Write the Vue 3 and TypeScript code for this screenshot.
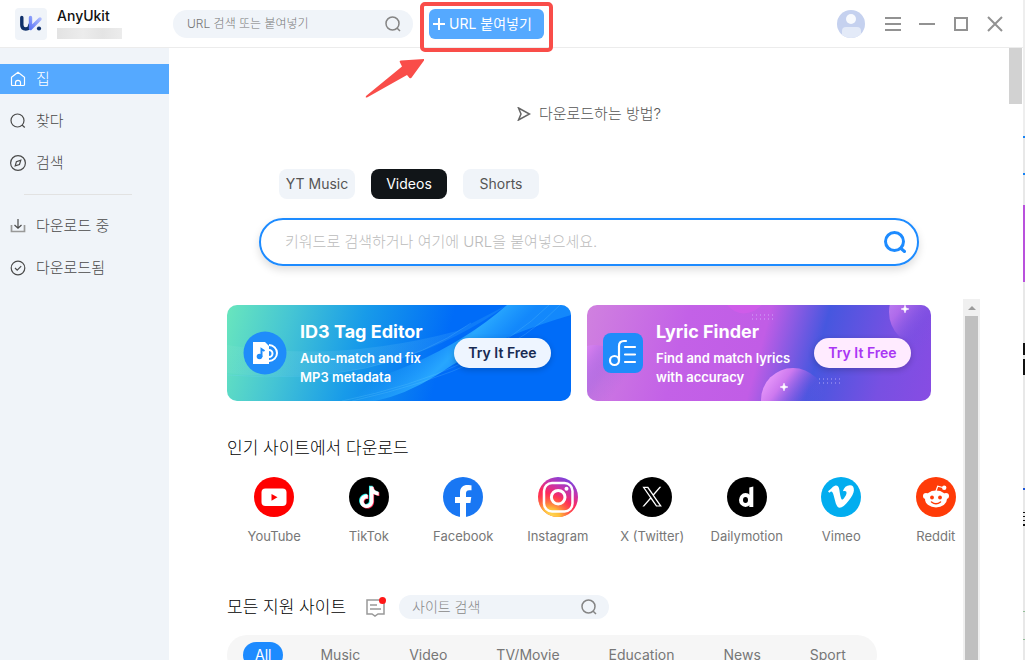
<script setup lang="ts">
import { ref } from 'vue'

interface NavItem { id: string; label: string }
interface Banner { id: string; title: string; lines: string[] }

const primaryNav: NavItem[] = [
  { id: 'home', label: '집' },
  { id: 'find', label: '찾다' },
  { id: 'explore', label: '검색' },
]
const downloadNav: NavItem[] = [
  { id: 'downloading', label: '다운로드 중' },
  { id: 'downloaded', label: '다운로드됨' },
]
const tabs: string[] = ['YT Music', 'Videos', 'Shorts']
const banners: Banner[] = [
  { id: 'tag', title: 'ID3 Tag Editor', lines: ['Auto-match and fix', 'MP3 metadata'] },
  { id: 'lyric', title: 'Lyric Finder', lines: ['Find and match lyrics', 'with accuracy'] },
]
const sites: string[] = ['YouTube', 'TikTok', 'Facebook', 'Instagram', 'X (Twitter)', 'Dailymotion', 'Vimeo', 'Reddit']
const categories: string[] = ['All', 'Music', 'Video', 'TV/Movie', 'Education', 'News', 'Sport']

const activeNav = ref<string>('home')
const activeTab = ref<string>('Videos')
const activeCategory = ref<string>('All')
const headerQuery = ref<string>('')
const mainQuery = ref<string>('')
const siteQuery = ref<string>('')

const notePath =
  'M12.525.02c1.31-.02 2.61-.01 3.91-.02.08 1.53.63 3.09 1.75 4.17 1.12 1.11 2.7 1.62 4.24 1.79v4.03c-1.44-.05-2.89-.35-4.2-.97-.57-.26-1.1-.59-1.62-.93-.01 2.92.01 5.84-.02 8.75-.08 1.4-.54 2.79-1.35 3.94-1.31 1.92-3.58 3.17-5.91 3.21-1.43.08-2.86-.31-4.08-1.03-2.02-1.19-3.44-3.37-3.65-5.71-.02-.5-.03-1-.01-1.49.18-1.9 1.12-3.72 2.58-4.96 1.66-1.44 3.98-2.13 6.15-1.72.02 1.48-.04 2.96-.04 4.44-.99-.32-2.15-.23-3.02.37-.63.41-1.11 1.04-1.36 1.75-.21.51-.15 1.07-.14 1.61.24 1.64 1.82 3.02 3.5 2.87 1.12-.01 2.19-.66 2.77-1.61.19-.33.4-.67.41-1.06.1-1.79.06-3.57.07-5.36.01-4.03-.01-8.05.02-12.07z'
</script>

<template>
  <div class="desktop">
    <div class="window">
      <header class="header">
        <div class="brand">
          <svg class="logo" viewBox="0 0 32 32" aria-hidden="true">
            <defs>
              <linearGradient id="logoFade" x1="1" y1="0" x2="0" y2="1">
                <stop offset="0" stop-color="#aebcff" /><stop offset="1" stop-color="#5f78f5" />
              </linearGradient>
            </defs>
            <rect width="32" height="32" rx="4" fill="#f0f4f9" />
            <path d="M6.800 9.500v7.500q0 4 4 4 4 0 4-4" fill="none" stroke="#10316b" stroke-width="3.400" stroke-linecap="round" />
            <path d="M15.500 9.500v11L25 11" fill="none" stroke="url(#logoFade)" stroke-width="3.400" stroke-linecap="round" stroke-linejoin="round" />
            <circle cx="24" cy="20.500" r="2.100" fill="#10316b" />
          </svg>
          <div class="brand-text">
            <strong>AnyUkit</strong>
            <span class="version-mask"></span>
          </div>
        </div>
        <label class="search header-search">
          <input v-model="headerQuery" type="text" placeholder="URL 검색 또는 붙여넣기" aria-label="URL 검색 또는 붙여넣기" />
          <svg viewBox="0 0 18 18" width="18" height="18" aria-hidden="true"><circle cx="8.500" cy="8.500" r="6.500" /><path d="m13 13 3 3" /></svg>
        </label>
        <div class="paste">
          <button class="paste-button" type="button">
            <svg viewBox="0 0 12 12" width="12" height="12" aria-hidden="true"><path d="M6 0v12M0 6h12" /></svg>
            <span>URL 붙여넣기</span>
          </button>
          <div class="callout"></div>
          <svg class="arrow" viewBox="0 0 60 42" aria-hidden="true"><path d="M59 2 36 3.500q-2 0-1 2l2 4L1 39q-1 2 1 1.500L42 18l2.500 3q1.500 1 2.500-1L59 3.500z" /></svg>
        </div>
        <div class="window-tools">
          <button class="avatar" type="button" aria-label="Account">
            <svg viewBox="0 0 28 28" aria-hidden="true">
              <defs><clipPath id="face"><circle cx="14" cy="14" r="14" /></clipPath></defs>
              <g clip-path="url(#face)"><rect width="28" height="28" fill="#c5d1ef" /><rect x="5" y="17" width="19" height="14" rx="4" fill="#e3eaf8" /><circle cx="14" cy="9" r="5" fill="#f8fafe" /></g>
            </svg>
          </button>
          <button type="button" aria-label="Menu"><svg viewBox="0 0 16 16"><path d="M0 2h16M0 8h16M0 14h16" /></svg></button>
          <button type="button" aria-label="Minimize"><svg viewBox="0 0 16 16"><path d="M0 8h16" /></svg></button>
          <button type="button" aria-label="Maximize"><svg viewBox="0 0 16 16"><path d="M2 2h12v12H2z" /></svg></button>
          <button type="button" aria-label="Close"><svg viewBox="0 0 16 16"><path d="m1 1 14 14M15 1 1 15" /></svg></button>
        </div>
      </header>

      <div class="body">
        <nav class="sidebar">
          <button v-for="item in primaryNav" :key="item.id" type="button" class="nav-item" :class="{ active: activeNav === item.id }" @click="activeNav = item.id">
            <svg viewBox="0 0 16 16" aria-hidden="true">
              <path v-if="item.id === 'home'" d="M1.500 6.300 8 1.200l6.500 5.100v7.200q0 1-1 1h-11q-1 0-1-1zM5.500 14.500v-2.700a2.500 2.500 0 0 1 5 0v2.700" />
              <g v-else-if="item.id === 'find'"><circle cx="7.500" cy="7.500" r="6.500" /><path d="m12 12 2.800 2.500" /></g>
              <g v-else><circle cx="8" cy="8" r="7.400" /><path d="m5.200 10.800 1.200-4.200 4.400-1.400-1.300 4.300z" /></g>
            </svg>
            <span>{{ item.label }}</span>
          </button>
          <hr />
          <button v-for="item in downloadNav" :key="item.id" type="button" class="nav-item" :class="{ active: activeNav === item.id }" @click="activeNav = item.id">
            <svg viewBox="0 0 16 16" aria-hidden="true">
              <g v-if="item.id === 'downloading'"><path d="M8 1v9M4.500 7 8 10.300 11.500 7" /><path d="M1.500 7v6.500h13V7" stroke="#999" stroke-width="1.700" /></g>
              <g v-else><circle cx="8" cy="8" r="6.800" /><path d="m5 8 2.200 2.200 4-4" /></g>
            </svg>
            <span>{{ item.label }}</span>
          </button>
        </nav>

        <main class="content">
          <a class="how-to" href="#">
            <svg viewBox="0 0 14 14" aria-hidden="true"><path d="m1.500 1 11 6-11 6L4 7z" /></svg>
            <span>다운로드하는 방법?</span>
          </a>
          <section class="finder">
            <div class="tabs" role="tablist">
              <button v-for="tab in tabs" :key="tab" type="button" role="tab" :aria-selected="activeTab === tab" :class="{ active: activeTab === tab }" @click="activeTab = tab">{{ tab }}</button>
            </div>
            <label class="main-search">
              <input v-model="mainQuery" type="text" placeholder="키워드로 검색하거나 여기에 URL을 붙여넣으세요." aria-label="키워드로 검색" />
              <svg viewBox="0 0 22 22" aria-hidden="true"><circle cx="10.500" cy="10.500" r="9" /><path d="m17 17.500 3.500 3" /></svg>
            </label>
          </section>

          <section class="panel">
            <div class="panel-content">
              <div class="banners">
                <article v-for="banner in banners" :key="banner.id" class="banner" :class="banner.id">
                  <svg v-if="banner.id === 'tag'" class="art" viewBox="0 0 344 96" preserveAspectRatio="none" aria-hidden="true">
                    <defs>
                      <linearGradient id="wave" gradientUnits="userSpaceOnUse" x1="190" y1="30" x2="236" y2="76"><stop offset="0" stop-color="#2cadff" stop-opacity="0" /><stop offset=".6" stop-color="#2cadff" stop-opacity=".9" /><stop offset="1" stop-color="#26a4ff" stop-opacity=".5" /></linearGradient>
                      <linearGradient id="mist" x1="0" x2="1"><stop offset="0" stop-color="#fff" stop-opacity=".04" /><stop offset="1" stop-color="#38bdf8" stop-opacity=".2" /></linearGradient>
                    </defs>
                    <path d="M0 68Q160 86 280 0L230 26Q110 58 0 40z" fill="url(#mist)" />
                    <path d="M60 96Q200 70 280 0h64v10Q262 34 210 70 178 90 148 96z" fill="url(#wave)" />
                    <path d="M115 96Q255 67 322 0M125 96Q275 62 333 0M0 70q155 12 244-52" fill="none" stroke="#78d5ff" stroke-opacity=".2" />
                  </svg>
                  <svg v-else class="art" viewBox="0 0 344 96" preserveAspectRatio="none" aria-hidden="true">
                    <defs>
                      <linearGradient id="bubble" x1="0" y1=".1" x2=".8" y2=".7"><stop offset="0" stop-color="#f4a6ff" /><stop offset=".35" stop-color="#cd79ef" /><stop offset=".75" stop-color="#7753e1" stop-opacity=".2" /><stop offset="1" stop-color="#7753e1" stop-opacity="0" /></linearGradient>
                    </defs>
                    <circle cx="8" cy="74" r="34" fill="url(#bubble)" opacity=".75" />
                    <circle cx="206" cy="95" r="32" fill="url(#bubble)" />
                    <circle cx="336" cy="7" r="34" fill="url(#bubble)" opacity=".65" />
                    <path d="M140 0q12 13 27 6l8-6z" fill="#d75ceb" opacity=".6" />
                    <path d="M165 10h23M165 14h23M232 74h23M232 78h23" stroke="#d8c7ff" stroke-opacity=".7" stroke-width="1" stroke-dasharray="1 3" />
                    <path d="m197 78 1 3 3 1-3 1-1 3-1-3-3-1 3-1zM318 0l1 3 3 1-3 1-1 3-1-3-3-1 3-1z" fill="#fff" stroke="#fff" stroke-width=".5" />
                  </svg>
                  <svg v-if="banner.id === 'tag'" class="product" viewBox="0 0 44 44" aria-hidden="true">
                    <circle cx="22" cy="22" r="21.500" fill="#1f8cfa" />
                    <path d="M26 14a8 8 0 0 1 0 16M26 19a3.500 3.500 0 0 1 0 7" fill="none" stroke="#fff" stroke-width="2" />
                    <path d="M10 11h12l4 4v18H10z" fill="#fff" /><path d="M18.500 26v-8l3 2" fill="none" stroke="#1f8cfa" stroke-width="2" /><circle cx="16.500" cy="25.500" r="2.800" fill="#1f8cfa" />
                  </svg>
                  <svg v-else class="product square" viewBox="0 0 40 40" aria-hidden="true">
                    <rect width="40" height="40" rx="8" fill="#1f8cfa" /><path d="M16 27V13q0-5 5-5h2M22 14h10M22 21.500h10M22 29h10" fill="none" stroke="#fff" stroke-width="2.200" stroke-linecap="round" /><circle cx="11.500" cy="27.500" r="4.500" fill="none" stroke="#fff" stroke-width="2.200" />
                  </svg>
                  <div class="banner-copy">
                    <h3>{{ banner.title }}</h3>
                    <p><template v-for="(line, i) in banner.lines" :key="line"><br v-if="i > 0" />{{ line }}</template></p>
                  </div>
                  <button type="button">Try It Free</button>
                </article>
              </div>

              <h2>인기 사이트에서 다운로드</h2>
              <div class="sites">
                <a v-for="site in sites" :key="site" href="#" class="site">
                  <svg viewBox="0 0 40 40" aria-hidden="true">
                    <g v-if="site === 'YouTube'"><circle cx="20" cy="20" r="20" fill="#f00" /><rect x="7.500" y="11.500" width="25" height="17.500" rx="4" fill="#fff" /><path d="m17.500 17 6 3.300-6 3.400z" fill="#f00" /></g>
                    <g v-else-if="site === 'TikTok'"><circle cx="20" cy="20" r="20" /><path :d="notePath" fill="#25f4ee" transform="translate(8.700 8.800) scale(.9)" /><path :d="notePath" fill="#fe2c55" transform="translate(10.200 10) scale(.9)" /><path :d="notePath" fill="#fff" transform="translate(9.500 9.400) scale(.9)" /></g>
                    <g v-else-if="site === 'Facebook'"><circle cx="20" cy="20" r="20" fill="#1977f3" /><path d="M17 40V26h-5v-6h5v-4.500c0-5 3-7.500 7.500-7.500 2 0 4 .4 4 .4v4.900h-2.300c-2.500 0-3.200 1.500-3.200 3.100V20h5.300l-.9 6H23v14z" fill="#fff" /></g>
                    <g v-else-if="site === 'Instagram'">
                      <defs>
                        <linearGradient id="instaBase" x1=".8" y1="0" x2=".3" y2="1"><stop offset="0" stop-color="#6845e8" /><stop offset=".3" stop-color="#c435ae" /><stop offset=".55" stop-color="#ff285b" /><stop offset="1" stop-color="#ff5640" /></linearGradient>
                        <radialGradient id="instaGlow" cx=".3" cy="1.050" r=".65"><stop offset="0" stop-color="#ffe35b" /><stop offset=".4" stop-color="#ffbd39" /><stop offset="1" stop-color="#ff6a35" stop-opacity="0" /></radialGradient>
                      </defs>
                      <circle cx="20" cy="20" r="20" fill="url(#instaBase)" /><circle cx="20" cy="20" r="20" fill="url(#instaGlow)" />
                      <g fill="none" stroke="#fff" stroke-width="2.500"><rect x="6" y="6" width="28.500" height="28.500" rx="8" /><circle cx="20.200" cy="20.200" r="6.800" stroke-width="3" /></g><circle cx="28.500" cy="11.800" r="2" fill="#fff" />
                    </g>
                    <g v-else-if="site === 'X (Twitter)'"><circle cx="20" cy="20" r="20" /><path d="M14.234 10.162 22.977 0h-2.072l-7.591 8.824L7.251 0H.258l9.168 13.343L.258 24H2.330l8.016-9.318L16.749 24h6.993zm-2.837 3.299-.929-1.329L3.076 1.560h3.182l5.965 8.532.929 1.329 7.754 11.090h-3.182z" fill="#fff" transform="translate(10.200 9.700) scale(.83)" /></g>
                    <g v-else-if="site === 'Dailymotion'"><circle cx="20" cy="20" r="20" /><ellipse cx="18.500" cy="23" rx="4.500" ry="5" fill="none" stroke="#fff" stroke-width="4" /><path d="M22.300 10.500l4-1V30h-4z" fill="#fff" /></g>
                    <g v-else-if="site === 'Vimeo'"><circle cx="20" cy="20" r="20" fill="#02adef" /><path transform="translate(7 6.500) scale(1.080)" fill="#fff" d="M23.977 6.416c-.105 2.338-1.739 5.543-4.894 9.609-3.268 4.247-6.026 6.370-8.290 6.370-1.409 0-2.578-1.294-3.553-3.881L5.322 11.400C4.603 8.816 3.834 7.522 3.010 7.522c-.179 0-.806.378-1.881 1.132L0 7.197c1.185-1.044 2.351-2.084 3.501-3.128C5.080 2.701 6.266 1.984 7.055 1.910c1.867-.18 3.016 1.100 3.447 3.838.465 2.953.789 4.789.971 5.507.539 2.450 1.131 3.674 1.776 3.674.502 0 1.256-.796 2.265-2.385 1.004-1.589 1.540-2.797 1.612-3.628.144-1.371-.395-2.061-1.614-2.061-.574 0-1.167.121-1.777.391 1.186-3.868 3.434-5.757 6.762-5.637 2.473.06 3.628 1.664 3.493 4.797z" /></g>
                    <g v-else><circle cx="20" cy="20" r="20" fill="#ff3b08" /><g fill="#fff"><ellipse cx="20" cy="22" rx="11" ry="8.500" /><circle cx="10" cy="19" r="3" /><circle cx="30" cy="19" r="3" /><circle cx="28.200" cy="10.800" r="2.200" /></g><path d="m20 14 1.700-4.800 5 1.300" fill="none" stroke="#fff" stroke-width="1.200" /><g fill="#ff3b08"><circle cx="16" cy="20.500" r="1.900" /><circle cx="24" cy="20.500" r="1.900" /></g><path d="M15.500 25q4.500 3.500 9 0" fill="none" stroke="#ff3b08" stroke-width="1.500" stroke-linecap="round" /></g>
                  </svg>
                  <span>{{ site }}</span>
                </a>
              </div>

              <div class="all-sites">
                <h2>모든 지원 사이트</h2>
                <button class="feedback" type="button" aria-label="Feedback">
                  <svg viewBox="0 0 22 22" aria-hidden="true"><path d="M2 4h17v14h-6l-3 2-3-2H2zM5 9h7M5 13h11" fill="none" stroke="#999" stroke-width="1.500" /><circle cx="17.500" cy="4.500" r="3.500" fill="#ff1717" /></svg>
                </button>
                <label class="search site-search">
                  <input v-model="siteQuery" type="text" placeholder="사이트 검색" aria-label="사이트 검색" />
                  <svg viewBox="0 0 18 18" width="18" height="18" aria-hidden="true"><circle cx="8.500" cy="8.500" r="6.500" /><path d="m13 13 3 3" /></svg>
                </label>
              </div>
              <div class="categories">
                <button v-for="category in categories" :key="category" type="button" :class="{ active: activeCategory === category }" @click="activeCategory = category">{{ category }}</button>
              </div>
            </div>
            <div class="panel-scrollbar" aria-hidden="true"><span class="up"></span><span class="thumb"></span></div>
          </section>
        </main>
        <div class="page-scrollbar" aria-hidden="true"><span></span></div>
      </div>
    </div>
    <div class="desktop-edge"></div>
  </div>
</template>

<style>
body { margin: 0; background: #fff; }
</style>

<style scoped>
* { box-sizing: border-box; }
.desktop { display: flex; height: 100vh; overflow: hidden; color: #111; font: 14px/20px Inter, "Noto Sans CJK KR", sans-serif; }
button, input { font: inherit; border: 0; padding: 0; background: none; color: inherit; }
button { cursor: pointer; }
a { color: inherit; text-decoration: none; }
h2, h3, p { margin: 0; }
.window { flex: 1; min-width: 0; display: flex; flex-direction: column; }
.desktop-edge { width: 2px; background: linear-gradient(#eee 0 136px, #1683f5 136px 138px, #e8e8e8 138px 173px, #1683f5 173px 175px, #e8e8e8 175px 205px, #b951dc 205px 282px, #e8e8e8 282px 343px, #111 343px 355px, #e8e8e8 355px 359px, #111 359px 375px, #e8e8e8 375px 488px, #1c55d9 488px 490px, #e8e8e8 490px 512px, #111 512px 513px, #e8e8e8 513px 516px, #111 516px 517px, #e8e8e8 517px 520px, #111 520px 521px, #e8e8e8 521px 524px, #111 524px 526px, #e8e8e8 526px 611px, #93be99 611px 612px, #e8e8e8 612px 639px, #93be99 639px 640px, #e8e8e8 640px); }

.header { height: 48px; flex: none; display: flex; align-items: center; border-bottom: 1px solid #ececec; padding: 0 20px 0 15px; }
.brand { display: flex; gap: 10px; width: 158px; flex: none; }
.logo { width: 32px; height: 32px; }
.brand-text { display: flex; flex-direction: column; }
.brand-text strong { font-size: 14px; font-weight: 500; line-height: 16px; }
.version-mask { width: 65px; height: 11px; margin-top: 4px; background: linear-gradient(90deg, #e3e3e3, #ececec 40%, #e4e4e4 70%, #ececec); }
.search { display: flex; align-items: center; background: #f0f4f9; border-radius: 14px; }
.search input { flex: 1; min-width: 0; outline: none; font-weight: 300; }
.search input::placeholder { color: #777; opacity: 1; }
.search svg { fill: none; stroke: #858585; stroke-width: 1.5; flex: none; }
.header-search { width: 240px; height: 28px; padding: 0 11px 0 14px; font-size: 12px; }
.paste { position: relative; margin-left: 16px; }
.paste-button { display: flex; align-items: center; gap: 4px; height: 30px; width: 115px; padding: 0 4px; border-radius: 6px; background: #55a9ff; color: #fff; white-space: nowrap; }
.paste-button svg { stroke: #fff; stroke-width: 2; }
.callout { position: absolute; left: -9px; top: -7px; width: 133px; height: 50px; border: 4px solid #f94d49; border-radius: 5px; pointer-events: none; }
.arrow { position: absolute; left: -64px; top: 48px; width: 60px; height: 42px; fill: #f94d49; pointer-events: none; }
.window-tools { margin-left: auto; display: flex; align-items: center; gap: 18px; }
.window-tools button { width: 16px; height: 16px; }
.window-tools svg { display: block; width: 100%; height: 100%; fill: none; stroke: #929292; stroke-width: 2; }
.window-tools .avatar { width: 28px; height: 28px; margin-right: 2px; }
.avatar svg { stroke: none; }

.body { flex: 1; min-height: 0; display: flex; }
.sidebar { width: 169px; flex: none; display: flex; flex-direction: column; gap: 12px; padding-top: 16px; background: #f0f4f9; }
.nav-item { display: flex; align-items: center; gap: 10px; height: 30px; padding: 0 10px; font-size: 15px; font-weight: 300; color: #4a4a4a; text-align: left; }
.nav-item.active { background: #55a9ff; color: #fff; }
.nav-item svg { width: 16px; height: 16px; fill: none; stroke: currentColor; stroke-width: 1.2; }
.sidebar hr { width: 108px; height: 1px; border: 0; margin: 4px 0 4px 24px; background: #e2e2e2; }
.content { flex: 1; min-width: 0; display: flex; flex-direction: column; align-items: center; }
.how-to { display: flex; flex: none; align-items: center; gap: 8px; margin-top: 56px; color: #555; font-size: 15px; font-weight: 300; }
.how-to svg { width: 14px; height: 14px; fill: none; stroke: #666; stroke-width: 1.5; }
.finder { width: 660px; max-width: calc(100% - 40px); margin-top: 45px; flex: none; }
.tabs { display: flex; gap: 16px; padding-left: 20px; }
.tabs button { width: 76px; height: 30px; border-radius: 8px; background: #f0f4f9; color: #555; white-space: nowrap; }
.tabs .active { background: #111518; color: #fff; }
.main-search { display: flex; align-items: center; height: 48px; margin-top: 19px; padding: 0 11px 0 24px; border: 2px solid #1d8bff; border-radius: 24px; box-shadow: 0 4px 8px #0002; }
.main-search input { flex: 1; min-width: 0; outline: none; font-size: 15px; font-weight: 300; }
.main-search input::placeholder { color: #bbb; opacity: 1; }
.main-search svg { width: 22px; height: 22px; fill: none; stroke: #1d8bff; stroke-width: 3; stroke-linecap: round; }

.panel { align-self: stretch; flex: 1; min-height: 0; margin: 33px 29px 0 58px; display: flex; }
.panel-content { flex: 1; min-width: 0; overflow: hidden; padding-top: 6px; }
.banners { display: grid; grid-template-columns: 1fr 1fr; gap: 16px; margin-right: 32px; }
.banner { position: relative; display: flex; align-items: center; height: 96px; padding: 0 20px 0 16px; border-radius: 10px; overflow: hidden; color: #fff; }
.banner.tag { background: linear-gradient(105deg, #69e6bd 0, #45c5d4 18%, #189be9 38%, #006cf8 62%, #006cf8 100%); }
.banner.lyric { background: linear-gradient(105deg, #d081df 0, #c361e7 28%, #c15de6 50%, #4657df 66%, #7850e2 85%, #884ce3 100%); }
.art { position: absolute; inset: 0; width: 100%; height: 100%; }
.product { position: relative; width: 44px; height: 44px; flex: none; }
.product.square { width: 40px; height: 40px; }
.banner-copy { position: relative; flex: 1; margin-left: 13px; white-space: nowrap; }
.banner h3 { font-size: 18px; line-height: 24px; font-weight: 700; }
.banner p { margin-top: 5px; font-size: 13px; line-height: 19px; font-weight: 600; }
.banner button { position: relative; width: 97px; height: 30px; border-radius: 15px; background: #eef5ff; color: #172a52; font-weight: 600; box-shadow: 0 2px 6px #0003; white-space: nowrap; }
.banner.lyric button { background: #ffebff; color: #a936f4; }
h2 { font-size: 17px; line-height: 24px; font-weight: 300; color: #000; }
.panel-content > h2 { margin-top: 35px; }
.sites { display: grid; grid-template-columns: repeat(8, 1fr); margin: 17px -20px 0 0; }
.site { display: flex; flex-direction: column; align-items: center; color: #777; font-size: 13px; line-height: 18px; white-space: nowrap; }
.site svg { width: 40px; height: 40px; margin-bottom: 10px; }
.all-sites { display: flex; align-items: center; height: 24px; margin-top: 50px; }
.feedback { width: 22px; height: 22px; margin-left: 19px; }
.feedback svg { display: block; }
.site-search { width: 210px; height: 24px; margin-left: 12px; padding: 0 11px 0 13px; }
.site-search input::placeholder { color: #888; }
.categories { display: flex; gap: 25px; width: 650px; max-width: 100%; height: 40px; margin-top: 16px; padding: 7px 16px; border-radius: 20px; background: #f6f6f6; }
.categories button { height: 26px; padding: 0 12px; border-radius: 13px; color: #777; white-space: nowrap; }
.categories .active { background: #1d8bff; color: #fff; }
.panel-scrollbar { width: 17px; display: flex; flex-direction: column; align-items: center; background: #f0f0f0; }
.up { width: 0; height: 0; margin: 7px 0 6px; border: 4px solid transparent; border-top: 0; border-bottom-color: #9b9b9b; }
.thumb { width: 13px; flex: 1; background: #c0c0c0; }
.page-scrollbar { width: 14px; padding-right: 1px; }
.page-scrollbar span { display: block; height: 56px; background: #d2d2d2; }
</style>
